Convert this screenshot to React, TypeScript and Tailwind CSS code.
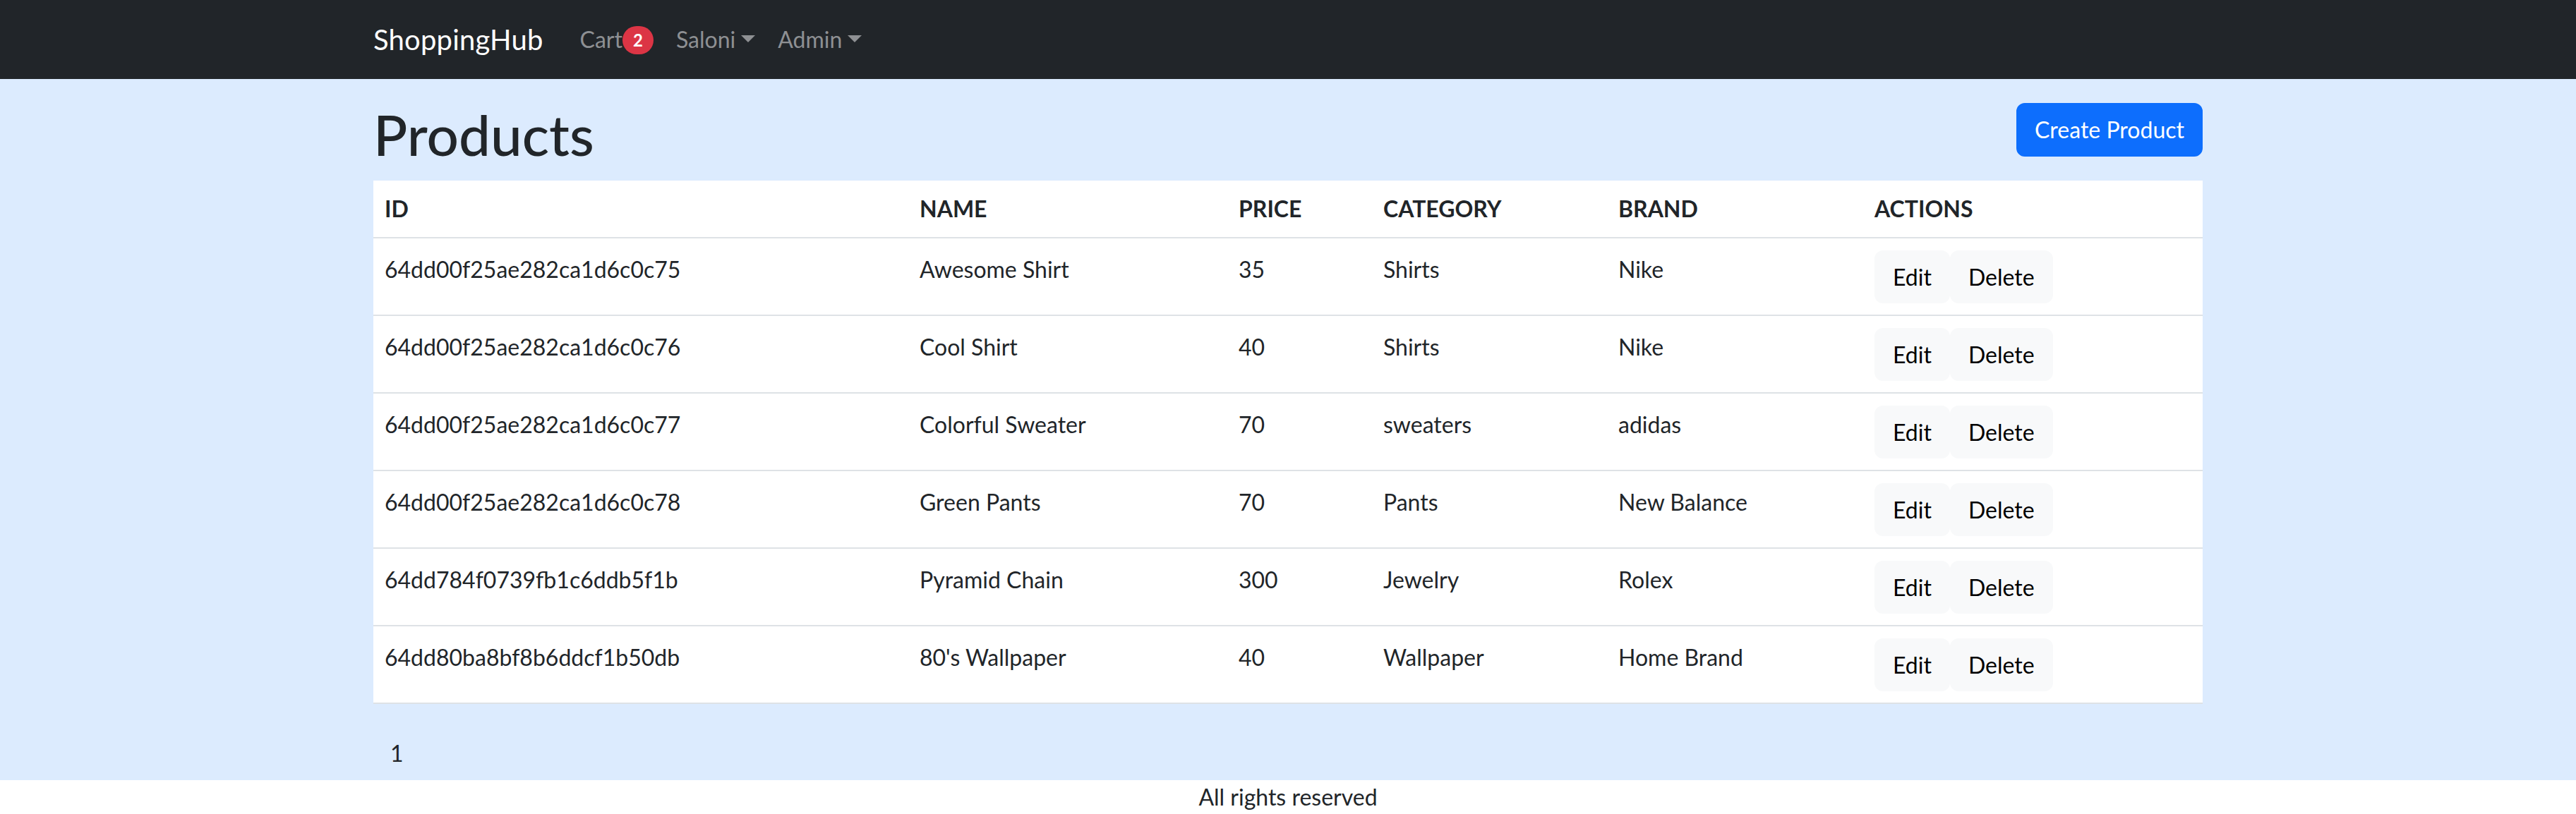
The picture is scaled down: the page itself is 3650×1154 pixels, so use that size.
const products = [
  { id: '64dd00f25ae282ca1d6c0c75', name: 'Awesome Shirt', price: 35, category: 'Shirts', brand: 'Nike' },
  { id: '64dd00f25ae282ca1d6c0c76', name: 'Cool Shirt', price: 40, category: 'Shirts', brand: 'Nike' },
  { id: '64dd00f25ae282ca1d6c0c77', name: 'Colorful Sweater', price: 70, category: 'sweaters', brand: 'adidas' },
  { id: '64dd00f25ae282ca1d6c0c78', name: 'Green Pants', price: 70, category: 'Pants', brand: 'New Balance' },
  { id: '64dd784f0739fb1c6ddb5f1b', name: 'Pyramid Chain', price: 300, category: 'Jewelry', brand: 'Rolex' },
  { id: '64dd80ba8bf8b6ddcf1b50db', name: "80's Wallpaper", price: 40, category: 'Wallpaper', brand: 'Home Brand' },
]

function Caret() {
  return (
    <span className="inline-block w-0 h-0 ml-[8px] align-[8px] border-t-[10px] border-x-[10px] border-t-current border-x-transparent" />
  )
}

function Navbar() {
  return (
    <header className="bg-[#212529] py-[16px]">
      <div className="w-[2592px] mx-auto flex items-center">
        <span className="text-white text-[40px] leading-[60px] py-[10px] mr-[36px] tracking-[0.2px]">ShoppingHub</span>
        <nav className="flex items-center text-[32px] leading-[48px] text-[#8e9093]">
          <span className="px-[16px] py-[16px]">
            Cart
            <span className="inline-block bg-[#dc3545] text-white text-[24px] font-bold leading-none rounded-full px-[15px] py-[8px] align-[2px]">
              2
            </span>
          </span>
          <span className="px-[16px] py-[16px]">
            Saloni
            <Caret />
          </span>
          <span className="px-[16px] py-[16px]">
            Admin
            <Caret />
          </span>
        </nav>
      </div>
    </header>
  )
}

function ProductTable() {
  return (
    <table className="w-full table-fixed bg-white text-[32px] leading-[48px] text-[#212529] border-collapse">
      <colgroup>
        <col className="w-[758px]" />
        <col className="w-[452px]" />
        <col className="w-[205px]" />
        <col className="w-[333px]" />
        <col className="w-[363px]" />
        <col className="w-[481px]" />
      </colgroup>
      <thead>
        <tr className="border-b-2 border-[#dee2e6]">
          <th className="p-[16px] text-left font-bold">ID</th>
          <th className="p-[16px] text-left font-bold">NAME</th>
          <th className="p-[16px] text-left font-bold">PRICE</th>
          <th className="p-[16px] text-left font-bold">CATEGORY</th>
          <th className="p-[16px] text-left font-bold">BRAND</th>
          <th className="p-[16px] text-left font-bold">ACTIONS</th>
        </tr>
      </thead>
      <tbody>
        {products.map((p) => (
          <tr key={p.id} className="border-b-2 border-[#dee2e6]">
            <td className="p-[16px] pt-[20px] align-top">{p.id}</td>
            <td className="p-[16px] pt-[20px] align-top">{p.name}</td>
            <td className="p-[16px] pt-[20px] align-top">{p.price}</td>
            <td className="p-[16px] pt-[20px] align-top">{p.category}</td>
            <td className="p-[16px] pt-[20px] align-top">{p.brand}</td>
            <td className="p-[16px] pt-[17px] pb-[16px] align-top">
              <div className="flex text-black">
                <button className="h-[75px] bg-[#f8f9fa] border-2 border-[#f8f9fa] rounded-[12px] px-[24px] leading-[48px]">
                  Edit
                </button>
                <button className="h-[75px] bg-[#f8f9fa] border-2 border-[#f8f9fa] rounded-[12px] px-[24px] leading-[48px]">
                  Delete
                </button>
              </div>
            </td>
          </tr>
        ))}
      </tbody>
    </table>
  )
}

export default function App() {
  return (
    <div className="min-h-[1154px] flex flex-col font-['Lato',sans-serif] text-[#212529]">
      <Navbar />
      <main className="flex-1 bg-[#dcebfe]">
        <div className="w-[2592px] mx-auto">
          <div className="flex items-center justify-between h-[144px]">
            <h1 className="text-[80px] leading-[96px] font-medium mb-[16px] pt-[28px]">Products</h1>
            <button className="bg-[#0d6efd] text-white text-[32px] leading-[48px] rounded-[12px] px-[24px] py-[12px] border-2 border-[#0d6efd]">
              Create Product
            </button>
          </div>
          <ProductTable />
          <div className="mt-[32px] flex">
            <span className="px-[24px] py-[14px] text-[32px] leading-[48px]">1</span>
          </div>
        </div>
      </main>
      <footer className="h-[48px] bg-white text-center text-[32px] leading-[48px]">All rights reserved</footer>
    </div>
  )
}
